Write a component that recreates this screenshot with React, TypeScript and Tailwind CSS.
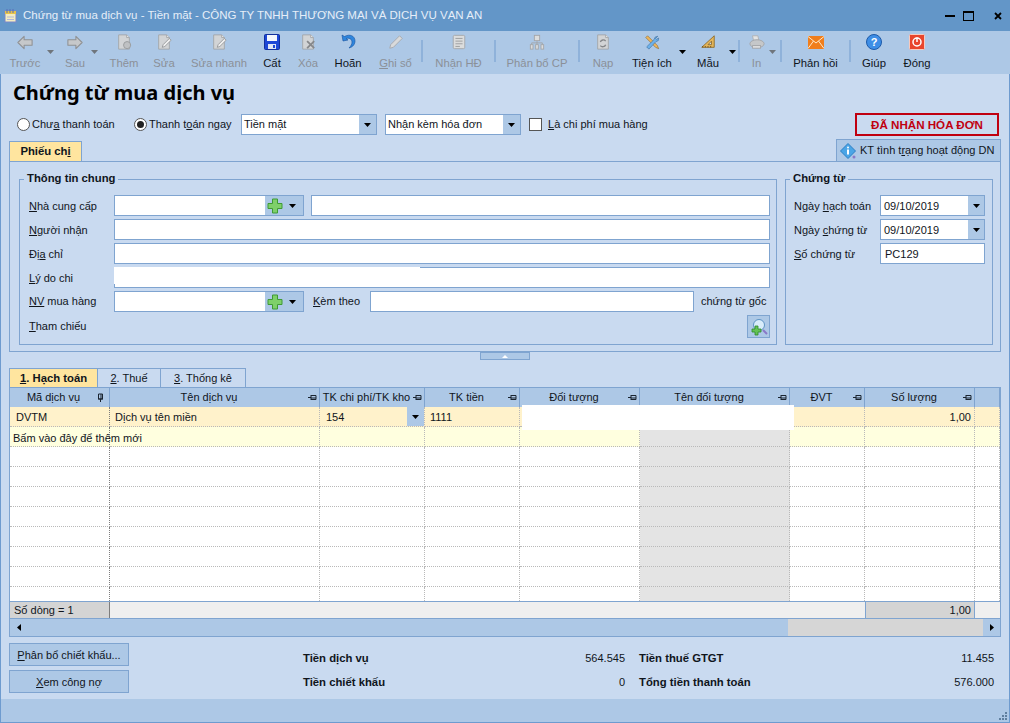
import type { ReactNode } from "react";

const Caret = ({ className = "" }: { className?: string }) => (
  <svg viewBox="0 0 7 4" className={`h-[4px] w-[7px] ${className}`}>
    <path d="M0 0h7L3.5 4z" fill="currentColor" />
  </svg>
);

const PageShape = ({ children }: { children?: ReactNode }) => (
  <svg viewBox="0 0 18 18" className="h-[16px] w-[16px]">
    <path d="M3 1h9l3 3v13H3z" fill="#d2d4d6" stroke="#a3a5a8" />
    <path d="M12 1v3h3" fill="#eceded" stroke="#a3a5a8" />
    {children}
  </svg>
);

const icons: Record<string, ReactNode> = {
  back: (
    <svg viewBox="0 0 18 16" className="h-[15px] w-[16px]">
      <path d="M8 1 1 8l7 7v-4h9V5H8z" fill="#c6c8ca" stroke="#8f9194" strokeWidth="1.2" strokeLinejoin="round" />
    </svg>
  ),
  forward: (
    <svg viewBox="0 0 18 16" className="h-[15px] w-[16px]">
      <path d="M10 1l7 7-7 7v-4H1V5h9z" fill="#c6c8ca" stroke="#8f9194" strokeWidth="1.2" strokeLinejoin="round" />
    </svg>
  ),
  add: (
    <PageShape>
      <circle cx="12.5" cy="12.5" r="4" fill="#bfc1c3" stroke="#96989b" />
    </PageShape>
  ),
  edit: (
    <PageShape>
      <path d="M8 12l7-7 2 2-7 7-3 1z" fill="#efefef" stroke="#96989b" />
    </PageShape>
  ),
  save: (
    <svg viewBox="0 0 16 16" className="h-[16px] w-[16px]">
      <rect x="0.5" y="0.5" width="15" height="15" rx="1" fill="#1d47d6" stroke="#12309c" />
      <rect x="3" y="1" width="10" height="6" fill="#f4f7fc" />
      <rect x="4" y="10" width="8" height="5" fill="#dfe6f5" />
      <rect x="9" y="11" width="2" height="3" fill="#1d47d6" />
    </svg>
  ),
  remove: (
    <PageShape>
      <path d="M8 8l8 8M16 8l-8 8" stroke="#86888b" strokeWidth="2" />
    </PageShape>
  ),
  undo: (
    <svg viewBox="0 0 16 16" className="h-[16px] w-[16px]">
      <path d="M2 1l1 6 5-1-2-1.5c3-1 6 .5 6 3.5 0 2-1 4-3 6 4-1 6-4 6-7C15 2 10-.5 4.500 2.500z" fill="#2f86de" stroke="#15519c" strokeWidth="0.6" />
    </svg>
  ),
  pencil: (
    <svg viewBox="0 0 18 18" className="h-[16px] w-[16px]">
      <path d="M2 16l1-4L13 2l3 3L6 15z" fill="#d9dadb" stroke="#a5a7aa" />
    </svg>
  ),
  invoice: (
    <svg viewBox="0 0 18 18" className="h-[16px] w-[16px]">
      <rect x="2.500" y="1.500" width="13" height="15" rx="1.500" fill="#dcdddd" stroke="#a3a5a8" />
      <path d="M5 5h8M5 8h8M5 11h8M5 14h5" stroke="#97999c" />
    </svg>
  ),
  split: (
    <svg viewBox="0 0 18 18" className="h-[16px] w-[16px]" fill="#dcdddd" stroke="#a3a5a8">
      <rect x="6" y="1.500" width="6" height="6" />
      <path d="M9 8v2M3 12v-2h12v2M9 10v2" fill="none" />
      <rect x="1.500" y="12" width="3" height="5" />
      <rect x="7.500" y="12" width="3" height="5" />
      <rect x="13.500" y="12" width="3" height="5" />
    </svg>
  ),
  reload: (
    <PageShape>
      <path d="M6 9a3.500 3.500 0 0 1 6-1M12 12a3.500 3.500 0 0 1-6 1" fill="none" stroke="#85878a" strokeWidth="1.500" />
    </PageShape>
  ),
  tools: (
    <svg viewBox="0 0 18 18" className="h-[16px] w-[16px]">
      <path d="M2 4l2-2 11 11 1.500 3.500L13 15z" fill="#eeb65c" stroke="#8b6a2e" strokeWidth="0.7" />
      <path d="M15.500 2.500l-3 1-1 2.500L3 14.500 5.500 17l8-8.500 2.500-1 .5-3-2.500 1.500-1-1z" fill="#6db1ea" stroke="#3d6f9f" strokeWidth="0.7" />
    </svg>
  ),
  ruler: (
    <svg viewBox="0 0 18 18" className="h-[16px] w-[16px]">
      <path d="M16 2v13H2z" fill="#e5b65a" stroke="#8c6a2b" />
      <path d="M13 8v4H9z" fill="#cbdcf0" stroke="#8c6a2b" />
      <path d="M3 15v-1.500M6 15v-1.500M9 15v-1.500M12 15v-1.500" stroke="#6e5020" />
    </svg>
  ),
  printer: (
    <svg viewBox="0 0 18 18" className="h-[16px] w-[16px]">
      <path d="M4 2h6l1 5H5z" fill="#e4e4e4" stroke="#aeb0b2" />
      <ellipse cx="9" cy="11" rx="8" ry="4.500" fill="#c5c7c9" stroke="#a3a5a8" />
      <rect x="4" y="13" width="9" height="3" fill="#dbdcdd" stroke="#a3a5a8" />
    </svg>
  ),
  mail: (
    <svg viewBox="0 0 16 13" className="h-[13px] w-[16px]">
      <rect width="16" height="13" fill="#f07e1c" />
      <path d="M0 .5l8 6.500 8-6.500M0 12.500l5.500-7.500M16 12.500 10.500 5" fill="none" stroke="#fde8c8" />
    </svg>
  ),
  help: (
    <svg viewBox="0 0 16 16" className="h-[16px] w-[16px]">
      <circle cx="8" cy="8" r="7.500" fill="#3e8ee6" stroke="#1d5aa8" />
      <text x="8" y="12" textAnchor="middle" fontSize="11" fontWeight="700" fill="#ffffff" fontFamily="Liberation Sans, sans-serif">?</text>
    </svg>
  ),
  close: (
    <svg viewBox="0 0 16 16" className="h-[16px] w-[16px]">
      <rect x="0.500" y="0.500" width="15" height="15" rx="1" fill="#e8452c" stroke="#f8c9bd" />
      <circle cx="8" cy="8" r="4" fill="none" stroke="#ffffff" strokeWidth="1.500" />
      <path d="M8 3.500v4.500" stroke="#ffffff" strokeWidth="1.500" />
    </svg>
  ),
};

type Tool = { label: ReactNode; icon: string; width: string; off?: boolean; caret?: string };

const tools: (Tool | "sep" | "sep-in")[] = [
  { label: "Trước", icon: "back", width: "w-[42px]", off: true, caret: "left-[43px]" },
  { label: "Sau", icon: "forward", width: "w-[58px]", off: true, caret: "left-[45px]" },
  { label: "Thêm", icon: "add", width: "w-[40px]", off: true },
  { label: "Sửa", icon: "edit", width: "w-[40px]", off: true },
  { label: "Sửa nhanh", icon: "edit", width: "w-[70px]", off: true },
  { label: "Cất", icon: "save", width: "w-[36px]" },
  { label: "Xóa", icon: "remove", width: "w-[36px]", off: true },
  { label: "Hoãn", icon: "undo", width: "w-[44px]" },
  { label: <><u>G</u>hi sổ</>, icon: "pencil", width: "w-[51px]", off: true },
  "sep",
  { label: "Nhận HĐ", icon: "invoice", width: "w-[71px]", off: true },
  "sep",
  { label: "Phân bổ CP", icon: "split", width: "w-[82px]", off: true },
  "sep",
  { label: "Nạp", icon: "reload", width: "w-[46px]", off: true },
  { label: "Tiện ích", icon: "tools", width: "w-[52px]", caret: "left-[53px]" },
  { label: "Mẫu", icon: "ruler", width: "w-[60px]", caret: "left-[51px]" },
  "sep",
  { label: "In", icon: "printer", width: "w-[33px]", off: true, caret: "left-[29px]" },
  "sep-in",
  { label: "Phản hồi", icon: "mail", width: "w-[67px]" },
  "sep",
  { label: "Giúp", icon: "help", width: "w-[46px]" },
  { label: "Đóng", icon: "close", width: "w-[40px]" },
];

const Toolbar = () => (
  <div className="flex h-[43px] items-stretch bg-[#adc8e6] pl-[4px]">
    {tools.map((t, i) => {
      if (t === "sep" || t === "sep-in")
        return (
          <div key={i} className={`mt-[9px] h-[22px] w-[2px] bg-[#8fb2da] ${t === "sep-in" ? "ml-[7px]" : ""}`} />
        );
      return (
        <div key={i} className={`relative flex shrink-0 flex-col items-center ${t.width}`}>
          <div className="flex h-[22px] items-center">{icons[t.icon]}</div>
          <div className={`mt-[3px] whitespace-nowrap text-[11.3px] leading-[15px] ${t.off ? "text-[#8b9098]" : "text-[#10151c]"}`}>
            {t.label}
          </div>
          {t.caret && (
            <span className={`absolute top-[19px] ${t.caret} ${t.off ? "text-[#6f757c]" : "text-black"}`}>
              <Caret />
            </span>
          )}
        </div>
      );
    })}
  </div>
);

const TitleBar = () => (
  <div className="flex h-[31px] items-center bg-[#6396c8] pl-[4px]">
    <svg viewBox="0 0 14 14" className="h-[14px] w-[14px]">
      <rect x="1" y="2" width="11" height="11" fill="#f4ecc0" stroke="#7b86c9" />
      <rect x="1" y="2" width="11" height="3" fill="#e8c34a" />
      <path d="M3 0v4M6 0v4M9 0v4" stroke="#5b6fb8" />
      <path d="M3 8h7M3 10.500h7" stroke="#b1b7d9" />
    </svg>
    <span className="ml-[5px] text-[11.5px] text-[#e6eef8]">
      Chứng từ mua dịch vụ - Tiền mặt - CÔNG TY TNHH THƯƠNG MẠI VÀ DỊCH VỤ VẠN AN
    </span>
    <div className="ml-auto flex items-center gap-[8px] pr-[8px]">
      <div className="h-[2px] w-[10px] bg-black" />
      <div className="h-[10px] w-[11px] border border-t-2 border-black" />
      <svg viewBox="0 0 8 8" className="ml-[12px] h-[8px] w-[8px]">
        <path d="M1 1l6 6M7 1 1 7" stroke="#000" strokeWidth="1.800" />
      </svg>
    </div>
  </div>
);

const Plus = () => (
  <svg viewBox="0 0 16 16" className="h-[16px] w-[16px]">
    <path d="M5.500 1h5v4.500H15v5h-4.500V15h-5v-4.500H1v-5h4.500z" fill="#7ed06a" stroke="#3f9a34" />
  </svg>
);

const inputCls = "h-[21px] border border-[#7fa4d0] bg-white";

const Lookup = () => (
  <div className={`flex w-[190px] ${inputCls}`}>
    <div className="flex-1" />
    <div className="flex w-[38px] items-center gap-[6px] bg-[#adc8e6] pl-[2px]">
      <Plus />
      <Caret className="text-black" />
    </div>
  </div>
);

const FieldLabel = ({ children, className = "w-[85px] pt-[2px]" }: { children: ReactNode; className?: string }) => (
  <div className={`shrink-0 whitespace-nowrap ${className}`}>{children}</div>
);

const DateBox = ({ value }: { value: string }) => (
  <div className={`flex w-[105px] items-center pl-[3px] ${inputCls}`}>
    <span className="flex-1 pt-[2px]">{value}</span>
    <div className="flex h-full w-[16px] items-center justify-center bg-[#adc8e6]">
      <Caret className="text-black" />
    </div>
  </div>
);

const InfoGroup = () => (
  <fieldset className="h-[174px] w-[758px] min-w-0 border border-[#7fa4d0] pl-[9px] pr-[6px]">
    <legend className="ml-[-5px] px-[3px] text-[11.3px] font-bold leading-[16px]">
      <span className="block -translate-y-px">Thông tin chung</span>
    </legend>
    <div className="mt-[8px] flex flex-col gap-[3px]">
      <div className="flex items-center">
        <FieldLabel><u>N</u>hà cung cấp</FieldLabel>
        <Lookup />
        <div className={`ml-[7px] flex-1 ${inputCls}`} />
      </div>
      <div className="flex items-center">
        <FieldLabel><u>Ng</u>ười nhận</FieldLabel>
        <div className={`flex-1 ${inputCls}`} />
      </div>
      <div className="flex items-center">
        <FieldLabel>Đị<u>a</u> chỉ</FieldLabel>
        <div className={`flex-1 ${inputCls}`} />
      </div>
      <div className="flex items-center">
        <FieldLabel><u>L</u>ý do chi</FieldLabel>
        <div className={`relative flex-1 ${inputCls}`}>
          <div className="absolute left-[-1px] top-[-1px] h-[17px] w-[306px] bg-white" />
        </div>
      </div>
      <div className="flex items-center">
        <FieldLabel className="w-[85px]"><u>NV</u> mua hàng</FieldLabel>
        <Lookup />
        <FieldLabel className="w-[66px] pl-[9px]"><u>K</u>èm theo</FieldLabel>
        <div className={`w-[324px] ${inputCls}`} />
        <span className="ml-[7px] whitespace-nowrap">chứng từ gốc</span>
      </div>
      <div className="flex h-[23px] items-center">
        <FieldLabel className="w-[85px]"><u>T</u>ham chiếu</FieldLabel>
        <div className="ml-auto flex h-[23px] w-[23px] items-center justify-center border border-[#7fa4d0] bg-[#adc8e6]">
          <svg viewBox="0 0 18 18" className="h-[18px] w-[18px]">
            <circle cx="9" cy="7" r="5.500" fill="#d8ecfa" stroke="#5d93c4" />
            <path d="M13 12l4 4" stroke="#8a78c8" strokeWidth="2" />
            <path d="M5 8h3v3h3v3H8v3H5v-3H2v-3h3z" fill="#63c255" stroke="#2f8a2a" strokeWidth="0.800" />
          </svg>
        </div>
      </div>
    </div>
  </fieldset>
);

const VoucherGroup = () => (
  <fieldset className="h-[174px] w-[208px] min-w-0 border border-[#7fa4d0] pl-[8px]">
    <legend className="ml-[-4px] px-[3px] text-[11.3px] font-bold leading-[16px]">
      <span className="block -translate-y-px">Chứng từ</span>
    </legend>
    <div className="mt-[8px] flex flex-col gap-[3px]">
      <div className="flex items-center">
        <FieldLabel className="w-[86px] pt-[2px]">Ngày <u>h</u>ạch toán</FieldLabel>
        <DateBox value="09/10/2019" />
      </div>
      <div className="flex items-center">
        <FieldLabel className="w-[86px] pt-[2px]">Ngày <u>c</u>hứng từ</FieldLabel>
        <DateBox value="09/10/2019" />
      </div>
      <div className="flex items-center">
        <FieldLabel className="w-[86px] pt-[2px]"><u>S</u>ố chứng từ</FieldLabel>
        <div className={`w-[105px] pl-[4px] pt-[1px] leading-[19px] ${inputCls}`}>PC129</div>
      </div>
    </div>
  </fieldset>
);

const columns = [
  { title: "Mã dịch vụ", w: "w-[100px]" },
  { title: "Tên dịch vụ", w: "w-[210px]" },
  { title: "TK chi phí/TK kho", w: "w-[105px]" },
  { title: "TK tiền", w: "w-[95px]" },
  { title: "Đối tượng", w: "w-[120px]" },
  { title: "Tên đối tượng", w: "w-[150px]" },
  { title: "ĐVT", w: "w-[75px]" },
  { title: "Số lượng", w: "w-[110px]" },
  { title: "", w: "w-[25px]" },
];

const PinIcon = () => (
  <svg viewBox="0 0 9 7" className="h-[7px] w-[9px] shrink-0">
    <path d="M0 3.500h3M3 1v5M3 1.500h5v4H3M3 4h5" fill="none" stroke="#1a2430" />
  </svg>
);

const Header = () => (
  <div className="flex h-[19px] shrink-0 bg-[#adc8e6]">
    {columns.map((c, i) => (
      <div
        key={i}
        className={`flex shrink-0 items-center border-r border-[#7fa4d0] pr-[2px] ${c.w}`}
      >
        <span className="flex-1 whitespace-nowrap text-center">{c.title}</span>
        {c.title !== "" &&
          (i === 0 ? (
            <svg viewBox="0 0 7 9" className="mr-[3px] h-[9px] w-[7px] shrink-0">
              <path d="M3.500 9V6M1 6h5M1.500 1v5h4V1zM4 1v5" fill="none" stroke="#1a2430" />
            </svg>
          ) : (
            <PinIcon />
          ))}
      </div>
    ))}
  </div>
);

const rowBg = (r: number) => (r === 0 ? "bg-[#fff2cb]" : r === 1 ? "bg-[#ffffdf]" : "bg-white");

const Cell = ({ r, i, children, className = "" }: { r: number; i: number; children?: ReactNode; className?: string }) => (
  <div
    className={`flex h-[20px] shrink-0 items-center border-b border-dotted border-b-[#b9b9b9] ${
      i === 0 ? "border-r border-r-[#7d7d7d]" : "border-r border-dotted border-r-[#b9b9b9]"
    } ${i === 5 && r > 0 ? "bg-[#e4e4e4]" : rowBg(r)} ${columns[i].w} ${className}`}
  >
    {children}
  </div>
);

const Row = ({ r }: { r: number }) => (
  <div className="flex">
    {columns.map((_, i) => {
      if (r === 0) {
        if (i === 0) return <Cell key={i} r={r} i={i} className="pl-[6px] pt-[2px]">DVTM</Cell>;
        if (i === 1) return <Cell key={i} r={r} i={i} className="pl-[5px] pt-[2px]">Dịch vụ tên miền</Cell>;
        if (i === 2)
          return (
            <Cell key={i} r={r} i={i} className="pl-[6px]">
              <span className="flex-1 pt-[2px]">154</span>
              <div className="flex h-full w-[17px] items-center justify-center bg-[#adc8e6]">
                <Caret className="text-black" />
              </div>
            </Cell>
          );
        if (i === 3) return <Cell key={i} r={r} i={i} className="pl-[5px] pt-[2px]">1111</Cell>;
        if (i === 7) return <Cell key={i} r={r} i={i} className="justify-end pr-[3px] pt-[2px]">1,00</Cell>;
      }
      if (r === 1 && i === 0)
        return (
          <Cell key={i} r={r} i={i} className="relative z-10 pl-[3px] pt-[3px]">
            <span className="whitespace-nowrap">Bấm vào đây để thêm mới</span>
          </Cell>
        );
      return <Cell key={i} r={r} i={i} />;
    })}
  </div>
);

const Grid = () => (
  <div className="relative flex h-[250px] flex-col border border-[#7fa4d0]">
    <Header />
    <div className="h-[194px] shrink-0 overflow-hidden bg-white">
      {[0, 1, 2, 3, 4, 5, 6, 7, 8, 9].map((r) => (
        <Row key={r} r={r} />
      ))}
    </div>
    <div className="flex h-[17px] shrink-0 border-t border-[#7fa4d0] bg-[#efefef]">
      <div className="flex w-[100px] items-center border-r border-[#7d7d7d] bg-[#d4d4d4] pl-[4px]">Số dòng = 1</div>
      <div className="w-[755px]" />
      <div className="flex w-[110px] items-center justify-end border-x border-[#7fa4d0] bg-[#d4d4d4] pr-[3px]">1,00</div>
    </div>
    <div className="flex h-[18px] shrink-0 items-center border-t border-[#7fa4d0] bg-[#adc8e6]">
      <div className="flex w-[18px] justify-center">
        <svg viewBox="0 0 4 7" className="h-[7px] w-[4px]"><path d="M4 0v7L0 3.500z" /></svg>
      </div>
      <div className="flex-1" />
      <div className="h-full w-[195px] bg-[#d6d6d6]" />
      <div className="flex w-[17px] justify-center">
        <svg viewBox="0 0 4 7" className="h-[7px] w-[4px]"><path d="M0 0v7l4-3.500z" /></svg>
      </div>
    </div>
    {/* vùng bị che trong ảnh gốc */}
    <div className="absolute left-[512px] top-[17px] z-20 h-[25px] w-[272px] bg-white" />
  </div>
);

const GridTab = ({ children, active }: { children: ReactNode; active?: boolean }) => (
  <div
    className={`flex h-[20px] items-center justify-center border-t border-r border-[#7fa4d0] ${
      active ? "w-[89px] border-l bg-[#ffe59f] text-[11.3px] font-bold" : ""
    }`}
  >
    {children}
  </div>
);

const Total = ({ label, value }: { label: string; value: string }) => (
  <div className="flex h-[24px] items-center justify-between">
    <b className="text-[11.3px]">{label}</b>
    <span>{value}</span>
  </div>
);

const SmallButton = ({ children }: { children: ReactNode }) => (
  <div className="flex h-[23px] w-[120px] items-center justify-center border border-[#7fa4d0] bg-[#adc8e6] pt-[2px]">
    {children}
  </div>
);

export default function App() {
  return (
    <div className="flex h-[723px] w-[1010px] flex-col overflow-hidden bg-[#c9daf0] font-['Liberation_Sans',sans-serif] text-[11px] text-[#10151c]">
      <TitleBar />
      <Toolbar />
      <div className="flex flex-1 flex-col border-x border-[#6e9bcf] px-[8px]">
        <h1 className="h-[36px] pl-[4px] pt-[5px] font-['Noto_Sans',sans-serif] text-[20px] font-bold leading-[27px] text-black">
          Chứng từ mua dịch vụ
        </h1>

        <div className="mt-[4px] flex h-[21px] items-center">
          <div className="ml-[8px] h-[13px] w-[13px] rounded-full border border-[#555] bg-white" />
          <span className="ml-[2px] w-[102px]">Chư<u>a</u> thanh toán</span>
          <div className="flex h-[13px] w-[13px] items-center justify-center rounded-full border border-[#555] bg-white">
            <div className="h-[7px] w-[7px] rounded-full bg-[#222]" />
          </div>
          <span className="ml-[2px] w-[92px]">Thanh t<u>o</u>án ngay</span>
          <div className="flex h-[21px] w-[136px] items-center border border-[#7fa4d0] bg-white pl-[2px]">
            <span className="flex-1">Tiền mặt</span>
            <div className="flex h-full w-[17px] items-center justify-center bg-[#adc8e6]"><Caret className="text-black" /></div>
          </div>
          <div className="ml-[8px] flex h-[21px] w-[136px] items-center border border-[#7fa4d0] bg-white pl-[2px]">
            <span className="flex-1">Nhận kèm hóa đơn</span>
            <div className="flex h-full w-[17px] items-center justify-center bg-[#adc8e6]"><Caret className="text-black" /></div>
          </div>
          <div className="ml-[8px] h-[13px] w-[13px] border border-[#555] bg-white" />
          <span className="ml-[6px]"><u>L</u>à chi phí mua hàng</span>
          <div className="ml-auto mr-[2px] flex h-[23px] w-[144px] items-center justify-center border-2 border-[#c00010] text-[11.6px] font-bold text-[#c00010]">
            ĐÃ NHẬN HÓA ĐƠN
          </div>
        </div>

        <div className="mt-[4px] flex h-[22px] items-end justify-between">
          <div className="flex h-[20px] w-[73px] items-center justify-center border-x border-t border-[#7fa4d0] bg-[#ffe59f] text-[11.3px] font-bold">
            Phiếu ch<u>i</u>
          </div>
          <div className="flex h-[22px] w-[165px] items-center gap-[4px] border-x border-t border-[#7fa4d0] bg-[#adc8e6] pl-[3px]">
            <svg viewBox="0 0 16 16" className="h-[16px] w-[16px]">
              <path d="M8 .5l7.500 7.500L8 15.500.5 8z" fill="#4aa5e6" stroke="#2a7fc4" strokeLinejoin="round" />
              <circle cx="8" cy="4.500" r="1" fill="#fff" />
              <rect x="7" y="6.500" width="2" height="5" fill="#fff" />
              <circle cx="14" cy="14" r="1.500" fill="#8a78c8" />
            </svg>
            <span className="whitespace-nowrap">KT tình t<u>r</u>ạng hoạt động DN</span>
          </div>
        </div>

        <div className="h-[191px] border border-[#7fa4d0] pl-[9px] pt-[9px]">
          <div className="flex gap-[8px]">
            <InfoGroup />
            <VoucherGroup />
          </div>
        </div>

        <div className="flex justify-center">
          <div className="flex h-[8px] w-[50px] items-center justify-center border border-[#7fa4d0] bg-[#adc8e6]">
            <svg viewBox="0 0 6 3" className="h-[3px] w-[6px]"><path d="M0 3h6L3 0z" fill="#fff" /></svg>
          </div>
        </div>

        <div className="mt-[8px] flex">
          <GridTab active><span><u>1</u>. Hạch toán</span></GridTab>
          <div className="w-[63px]"><GridTab><span><u>2</u>. Thuế</span></GridTab></div>
          <div className="w-[85px]"><GridTab><span><u>3</u>. Thống kê</span></GridTab></div>
        </div>
        <div className="-mt-px">
          <Grid />
        </div>

        <div className="mt-[6px] flex">
          <div className="flex w-[120px] flex-col gap-[4px]">
            <SmallButton><span><u>P</u>hân bổ chiết khấu...</span></SmallButton>
            <SmallButton><span><u>X</u>em công nợ</span></SmallButton>
          </div>
          <div className="ml-[174px] mt-[3px] grid grid-cols-[322px_355px] gap-x-[14px]">
            <Total label="Tiền dịch vụ" value="564.545" />
            <Total label="Tiền thuế GTGT" value="11.455" />
            <Total label="Tiền chiết khấu" value="0" />
            <Total label="Tổng tiền thanh toán" value="576.000" />
          </div>
        </div>
      </div>
      <div className="relative h-[24px] shrink-0 border-x border-b border-[#6e9bcf] bg-[#adc8e6]">
        <svg viewBox="0 0 9 9" className="absolute bottom-[1px] right-[1px] h-[9px] w-[9px]" fill="#5f7f9f">
          <rect x="6" y="0" width="2" height="2" />
          <rect x="3" y="3" width="2" height="2" />
          <rect x="6" y="3" width="2" height="2" />
          <rect x="0" y="6" width="2" height="2" />
          <rect x="3" y="6" width="2" height="2" />
          <rect x="6" y="6" width="2" height="2" />
        </svg>
      </div>
    </div>
  );
}
